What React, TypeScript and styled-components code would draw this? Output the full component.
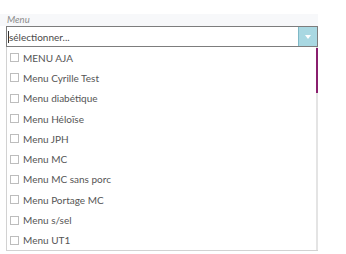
import styled, { createGlobalStyle } from "styled-components";

const menus = [
  "MENU AJA",
  "Menu Cyrille Test",
  "Menu diabétique",
  "Menu Héloïse",
  "Menu JPH",
  "Menu MC",
  "Menu MC sans porc",
  "Menu Portage MC",
  "Menu s/sel",
  "Menu UT1",
];

const GlobalStyle = createGlobalStyle`
  body {
    margin: 0;
    background: #ffffff;
    font-family: Lato, "Open Sans", sans-serif;
  }
`;

const App = () => {
  return (
    <>
      <GlobalStyle />
      <StyledPage>
        <StyledLabel>Menu</StyledLabel>
        <StyledField>
          <StyledInput>
            <StyledCaret />
            sélectionner...
          </StyledInput>
          <StyledToggle>
            <svg width="6" height="4" viewBox="0 0 6 4">
              <path d="M0 0 H6 L3 4 Z" fill="#ffffff" />
            </svg>
          </StyledToggle>
        </StyledField>
        <StyledDropdown>
          <StyledList>
            {menus.map((menu) => (
              <StyledItem key={menu}>
                <StyledCheckbox />
                {menu}
              </StyledItem>
            ))}
          </StyledList>
          <StyledScrollTrack>
            <StyledScrollThumb />
          </StyledScrollTrack>
        </StyledDropdown>
      </StyledPage>
    </>
  );
};

export default App;

const StyledPage = styled.div`
  width: 318px;
  padding-top: 14px;
  display: flex;
  flex-direction: column;
`;

const StyledLabel = styled.div`
  height: 12px;
  padding-left: 7px;
  background: #f7f8fa;
  font-size: 9.5px;
  line-height: 12px;
  font-style: italic;
  color: #8c8c8c;
`;

const StyledField = styled.div`
  margin-left: 6px;
  height: 21px;
  display: flex;
  border: 1px solid #7d7d7d;
  box-sizing: border-box;
`;

const StyledInput = styled.div`
  flex: 1;
  display: flex;
  align-items: center;
  font-size: 10px;
  color: #4a4a4a;
  padding-left: 1px;
  background: #ffffff;
`;

const StyledCaret = styled.span`
  width: 1px;
  height: 12px;
  background: #333333;
`;

const StyledToggle = styled.div`
  width: 18px;
  display: flex;
  align-items: center;
  justify-content: center;
  background: #a9d8e2;
  border-left: 1px solid #7fb8c6;
`;

const StyledDropdown = styled.div`
  margin-left: 6px;
  height: 204px;
  display: flex;
  border-left: 1px solid #d2d2d2;
  border-bottom: 1px solid #d2d2d2;
  box-sizing: border-box;
`;

const StyledList = styled.div`
  flex: 1;
  padding-top: 0.5px;
  display: flex;
  flex-direction: column;
`;

const StyledItem = styled.div`
  flex-shrink: 0;
  height: 20.3px;
  display: flex;
  align-items: center;
  gap: 4px;
  padding-left: 3px;
  font-size: 10px;
  color: #555555;
`;

const StyledCheckbox = styled.span`
  width: 7px;
  height: 7px;
  border: 1px solid #bdbdbd;
  background: #ffffff;
`;

const StyledScrollTrack = styled.div`
  width: 2px;
  background: #e4e4e4;
  display: flex;
  flex-direction: column;
`;

const StyledScrollThumb = styled.div`
  margin-top: 1px;
  height: 45px;
  background: #8a1f6e;
`;
